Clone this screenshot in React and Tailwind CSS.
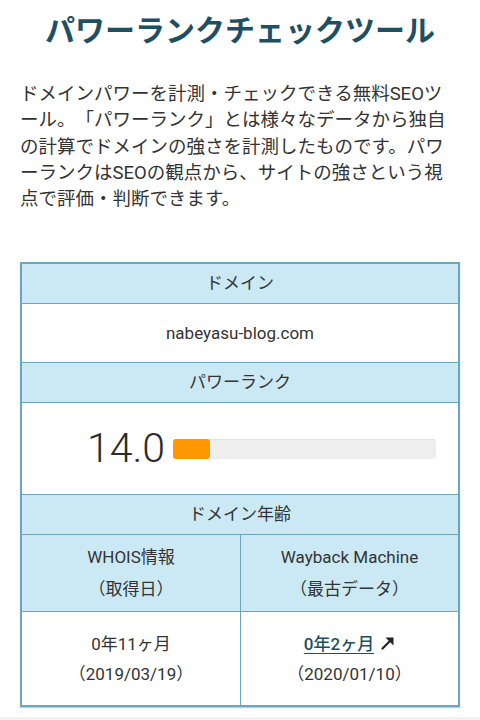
import React from "react";

const font = { fontFamily: "Roboto, 'Noto Sans CJK JP', sans-serif" };

function Arrow() {
  return (
    <svg width="14" height="14" viewBox="0 0 14 14" className="inline-block ml-[7px] -mt-[4px] align-middle">
      <line x1="1.5" y1="12.5" x2="10" y2="4" stroke="#222" strokeWidth="2.2" strokeLinecap="round" />
      <polygon points="4.5,1.5 12.5,1.5 12.5,9.5" fill="#222" />
    </svg>
  );
}

export default function App() {
  return (
    <div className="w-[480px] h-[720px] overflow-hidden bg-white text-[#333] [text-spacing-trim:space-all]" style={font}>
      <div className="pt-[11px]">
        <h1 className="text-center text-[30px] leading-[40px] font-bold text-[#1e4f62]">
          パワーランクチェックツール
        </h1>
        <p className="mt-[30px] px-5 text-[18.5px] leading-[26.25px] text-[#333]">
          ドメインパワーを計測・チェックできる無料SEOツール。「パワーランク」とは様々なデータから独自の計算でドメインの強さを計測したものです。パワーランクはSEOの観点から、サイトの強さという視点で評価・判断できます。
        </p>
      </div>

      <div className="mx-5 mt-[50px] border-2 border-[#6ba5bf] text-[17px] text-[#333] shadow-[0_1px_1px_rgba(107,165,191,0.5)]">
        <div className="h-[39px] flex items-center justify-center bg-[#cbe9f5]">ドメイン</div>
        <div className="h-[59px] flex items-center justify-center border-t border-[#6ba5bf]">nabeyasu-blog.com</div>
        <div className="h-[40px] flex items-center justify-center bg-[#cbe9f5] border-t border-[#6ba5bf]">パワーランク</div>
        <div className="h-[92px] flex items-center pl-[65px] pr-[22px] gap-[8px] border-t border-[#6ba5bf]">
          <span className="text-[41px] leading-none font-light text-[#2b2b2b]">14.0</span>
          <div className="flex-1 h-[20px] rounded-[3px] bg-[#eeeeee] shadow-[inset_0_1px_1px_rgba(0,0,0,0.06)]">
            <div className="h-full w-[14%] rounded-[3px] bg-[#ff9800]"></div>
          </div>
        </div>
        <div className="h-[40px] flex items-center justify-center bg-[#cbe9f5] border-t border-[#6ba5bf]">ドメイン年齢</div>
        <div className="grid grid-cols-2 h-[77px] bg-[#cbe9f5] border-t border-[#6ba5bf]">
          <div className="flex flex-col items-center justify-center leading-[32px]">
            <span>WHOIS情報</span>
            <span>（取得日）</span>
          </div>
          <div className="flex flex-col items-center justify-center leading-[32px] border-l border-[#6ba5bf]">
            <span>Wayback Machine</span>
            <span>（最古データ）</span>
          </div>
        </div>
        <div className="grid grid-cols-2 h-[94px] border-t border-[#6ba5bf]">
          <div className="flex flex-col items-center justify-center leading-[30px]">
            <span>0年11ヶ月</span>
            <span>（2019/03/19）</span>
          </div>
          <div className="flex flex-col items-center justify-center leading-[30px] border-l border-[#6ba5bf]">
            <span>
              <a className="font-medium text-[#1e4f62] underline underline-offset-[3px]">0年2ヶ月</a>
              <Arrow />
            </span>
            <span>（2020/01/10）</span>
          </div>
        </div>
      </div>
      <div className="mt-[10px] h-[4px] bg-[#f2f2f2]"></div>
    </div>
  );
}
